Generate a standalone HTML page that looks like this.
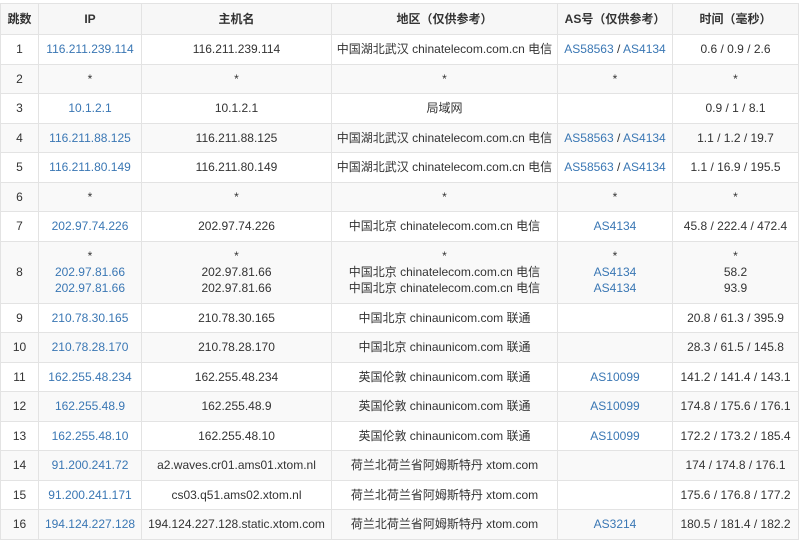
<!DOCTYPE html>
<html><head><meta charset="utf-8"><style>
body{margin:0;background:#fff;font-family:"Liberation Sans","Noto Sans CJK SC",sans-serif;font-size:12px;color:#333}
table{position:absolute;left:0;top:3px;width:798px;border-collapse:collapse;table-layout:fixed}
td,th{border:1px solid #e3e3e3;text-align:center;padding:0;line-height:16px}
th{height:30px;background:#f7f7f7;font-weight:bold;font-size:12px}
td{height:28.5px}
tr:nth-child(odd) td{background:#f9f9f9}
a{color:#3a77b4;text-decoration:none}
.t td{height:61px}
</style></head><body>
<table>
<colgroup><col style="width:38px"><col style="width:103px"><col style="width:190px"><col style="width:226px"><col style="width:115px"><col style="width:126px"></colgroup>
<tr><th>跳数</th><th>IP</th><th>主机名</th><th>地区（仅供参考）</th><th>AS号（仅供参考）</th><th>时间（毫秒）</th></tr>
<tr><td>1</td><td><a>116.211.239.114</a></td><td>116.211.239.114</td><td>中国湖北武汉 chinatelecom.com.cn 电信</td><td><a>AS58563</a> / <a>AS4134</a></td><td>0.6 / 0.9 / 2.6</td></tr>
<tr><td>2</td><td>*</td><td>*</td><td>*</td><td>*</td><td>*</td></tr>
<tr><td>3</td><td><a>10.1.2.1</a></td><td>10.1.2.1</td><td>局域网</td><td></td><td>0.9 / 1 / 8.1</td></tr>
<tr><td>4</td><td><a>116.211.88.125</a></td><td>116.211.88.125</td><td>中国湖北武汉 chinatelecom.com.cn 电信</td><td><a>AS58563</a> / <a>AS4134</a></td><td>1.1 / 1.2 / 19.7</td></tr>
<tr><td>5</td><td><a>116.211.80.149</a></td><td>116.211.80.149</td><td>中国湖北武汉 chinatelecom.com.cn 电信</td><td><a>AS58563</a> / <a>AS4134</a></td><td>1.1 / 16.9 / 195.5</td></tr>
<tr><td>6</td><td>*</td><td>*</td><td>*</td><td>*</td><td>*</td></tr>
<tr><td>7</td><td><a>202.97.74.226</a></td><td>202.97.74.226</td><td>中国北京 chinatelecom.com.cn 电信</td><td><a>AS4134</a></td><td>45.8 / 222.4 / 472.4</td></tr>
<tr class="t"><td>8</td><td>*<br><a>202.97.81.66</a><br><a>202.97.81.66</a></td><td>*<br>202.97.81.66<br>202.97.81.66</td><td>*<br>中国北京 chinatelecom.com.cn 电信<br>中国北京 chinatelecom.com.cn 电信</td><td>*<br><a>AS4134</a><br><a>AS4134</a></td><td>*<br>58.2<br>93.9</td></tr>
<tr><td>9</td><td><a>210.78.30.165</a></td><td>210.78.30.165</td><td>中国北京 chinaunicom.com 联通</td><td></td><td>20.8 / 61.3 / 395.9</td></tr>
<tr><td>10</td><td><a>210.78.28.170</a></td><td>210.78.28.170</td><td>中国北京 chinaunicom.com 联通</td><td></td><td>28.3 / 61.5 / 145.8</td></tr>
<tr><td>11</td><td><a>162.255.48.234</a></td><td>162.255.48.234</td><td>英国伦敦 chinaunicom.com 联通</td><td><a>AS10099</a></td><td>141.2 / 141.4 / 143.1</td></tr>
<tr><td>12</td><td><a>162.255.48.9</a></td><td>162.255.48.9</td><td>英国伦敦 chinaunicom.com 联通</td><td><a>AS10099</a></td><td>174.8 / 175.6 / 176.1</td></tr>
<tr><td>13</td><td><a>162.255.48.10</a></td><td>162.255.48.10</td><td>英国伦敦 chinaunicom.com 联通</td><td><a>AS10099</a></td><td>172.2 / 173.2 / 185.4</td></tr>
<tr><td>14</td><td><a>91.200.241.72</a></td><td>a2.waves.cr01.ams01.xtom.nl</td><td>荷兰北荷兰省阿姆斯特丹 xtom.com</td><td></td><td>174 / 174.8 / 176.1</td></tr>
<tr><td>15</td><td><a>91.200.241.171</a></td><td>cs03.q51.ams02.xtom.nl</td><td>荷兰北荷兰省阿姆斯特丹 xtom.com</td><td></td><td>175.6 / 176.8 / 177.2</td></tr>
<tr><td>16</td><td><a>194.124.227.128</a></td><td>194.124.227.128.static.xtom.com</td><td>荷兰北荷兰省阿姆斯特丹 xtom.com</td><td><a>AS3214</a></td><td>180.5 / 181.4 / 182.2</td></tr>
</table>
</body></html>
